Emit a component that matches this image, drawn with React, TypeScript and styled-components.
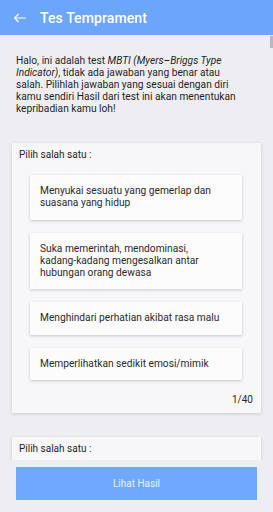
import styled, { createGlobalStyle } from 'styled-components';

const GlobalStyle = createGlobalStyle`
  html, body {
    margin: 0;
    padding: 0;
    background: #eeeef2;
  }
  body {
    font-family: Roboto, 'Noto Sans', sans-serif;
    -webkit-font-smoothing: antialiased;
  }
`;

const Screen = styled.div`
  width: 273px;
  height: 512px;
  display: flex;
  flex-direction: column;
  background: #eeeef2;
  overflow: hidden;
`;

const Toolbar = styled.header`
  height: 35px;
  flex: none;
  display: flex;
  align-items: center;
  background: #6ca6fa;
  color: #fff;
`;

const BackButton = styled.button`
  width: 40px;
  height: 35px;
  padding: 0 0 0 13px;
  display: flex;
  align-items: center;
  border: 0;
  background: transparent;
  color: inherit;
`;

const Title = styled.h1`
  margin: 0;
  font-size: 14px;
  font-weight: 500;
  letter-spacing: 0.1px;
`;

const Content = styled.main`
  flex: 1;
  position: relative;
  overflow: hidden;
`;

const ScrollThumb = styled.div`
  position: absolute;
  top: 1px;
  right: 0;
  width: 3px;
  height: 12px;
  background: #b9b9bd;
`;

const Intro = styled.p`
  margin: 0;
  padding: 20px 26px 0 16px;
  font-size: 10.2px;
  line-height: 12px;
  color: #1f1f1f;

  em {
    font-style: italic;
  }
`;

const Card = styled.section<{ $top: number }>`
  margin: ${(p) => p.$top}px 12px 0;
  padding: 6px 8px 7px 7px;
  background: #f7f7f9;
  box-shadow: 0 1px 3px rgba(0, 0, 0, 0.16);
`;

const Prompt = styled.div`
  font-size: 10px;
  line-height: 12px;
  color: #1f1f1f;
`;

const Options = styled.div`
  display: flex;
  flex-direction: column;
  gap: 13px;
  margin: 14px 11px 0 11px;
`;

const Option = styled.button`
  display: block;
  width: 100%;
  padding: 10px 10px;
  border: 0;
  text-align: left;
  font-family: inherit;
  font-size: 10.2px;
  line-height: 12.3px;
  color: #2a2a2a;
  background: #fcfcfd;
  box-shadow: 0 1px 3px rgba(0, 0, 0, 0.2);
`;

const NoBreak = styled.span`
  white-space: nowrap;
`;

const Counter = styled.div`
  margin-top: 14px;
  text-align: right;
  font-size: 10px;
  line-height: 12px;
  color: #2a2a2a;
`;

const Footer = styled.footer`
  flex: none;
  padding: 7px 16px 12px;
`;

const ResultButton = styled.button`
  width: 100%;
  height: 33px;
  border: 0;
  background: #6fa8fc;
  color: #eaf2ff;
  font-family: inherit;
  font-size: 10px;
`;

const App = () => (
  <Screen>
    <GlobalStyle />
    <Toolbar>
      <BackButton aria-label="Kembali">
        <svg width="14" height="10" viewBox="0 0 14 10" fill="none" stroke="currentColor" strokeWidth="1.2">
          <path d="M13 5H1.5M5.5 1L1.5 5l4 4" />
        </svg>
      </BackButton>
      <Title>Tes Temprament</Title>
    </Toolbar>
    <Content>
      <ScrollThumb />
      <Intro>
        Halo, ini adalah test <em>MBTI (Myers–Briggs Type Indicator)</em>, tidak ada jawaban yang benar atau salah.
        Pilihlah jawaban yang sesuai dengan diri kamu sendiri Hasil dari test ini akan menentukan kepribadian kamu loh!
      </Intro>
      <Card $top={28}>
        <Prompt>Pilih salah satu :</Prompt>
        <Options>
          <Option>Menyukai sesuatu yang gemerlap dan suasana yang hidup</Option>
          <Option>
            Suka memerintah, mendominasi, <NoBreak>kadang-kadang</NoBreak> mengesalkan antar hubungan orang dewasa
          </Option>
          <Option>Menghindari perhatian akibat rasa malu</Option>
          <Option>Memperlihatkan sedikit emosi/mimik</Option>
        </Options>
        <Counter>1/40</Counter>
      </Card>
      <Card $top={24}>
        <Prompt>Pilih salah satu :</Prompt>
      </Card>
    </Content>
    <Footer>
      <ResultButton>Lihat Hasil</ResultButton>
    </Footer>
  </Screen>
);

export default App;
